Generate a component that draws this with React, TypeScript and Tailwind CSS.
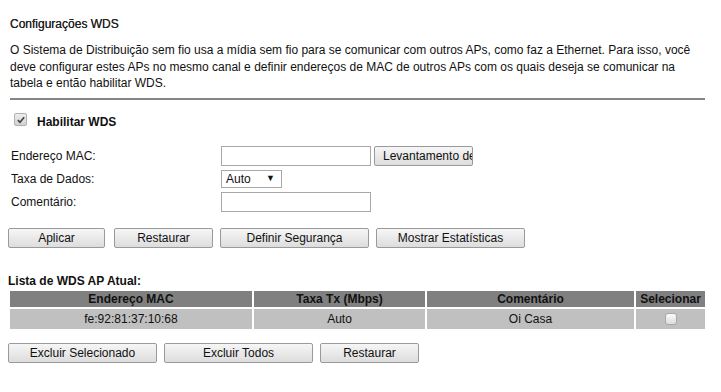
import React from 'react'

const btn =
  'h-[20px] border border-[#9a9a9a] rounded-[2px] bg-gradient-to-b from-[#f6f6f6] to-[#dddddd] text-[12px] text-[#111] leading-none'

export default function App() {
  return (
    <div className="w-[721px] h-[392px] bg-white font-['Liberation_Sans',Arial,sans-serif] text-[12px] text-[#111] overflow-hidden">
      <div className="px-[10px] pt-[17px]">
        <h1 className="text-[12px] font-normal text-[#222] leading-[14px] [text-shadow:0_0_0.3px_#333]">Configurações WDS</h1>
        <p className="mt-[11px] leading-[16.5px] text-[12px] w-[700px]">
          O Sistema de Distribuição sem fio usa a mídia sem fio para se comunicar com outros APs, como faz a Ethernet. Para isso, você
          deve configurar estes APs no mesmo canal e definir endereços de MAC de outros APs com os quais deseja se comunicar na
          tabela e então habilitar WDS.
        </p>
        <div className="mt-[6px] h-[2px] bg-[#858585] w-[695px]" />

        <label className="mt-[11px] h-[18px] flex items-center gap-[10px] pl-[4px]">
          <span className="w-[13px] h-[13px] rounded-[2px] border border-[#b0b0b0] bg-gradient-to-b from-[#eeeeee] to-[#d2d2d2] flex items-center justify-center">
            <svg viewBox="0 0 12 12" className="w-[10px] h-[10px]">
              <path d="M2.2 6.2 L4.8 8.7 L9.8 2.8" fill="none" stroke="#444" strokeWidth="2" />
            </svg>
          </span>
          <span className="font-bold text-[12px] mt-[4px]">Habilitar WDS</span>
        </label>

        <div className="mt-[17px] grid grid-cols-[211px_1fr] gap-y-[4px] items-center">
          <span className="pl-[1px]">Endereço MAC:</span>
          <div className="flex items-center gap-[3px]">
            <div className="w-[150px] h-[20px] border border-[#a9a9a9] bg-white" />
            <div className={btn + ' w-[99px] flex items-center pl-[8px] overflow-hidden whitespace-nowrap'}>Levantamento de</div>
          </div>
          <span className="pl-[1px]">Taxa de Dados:</span>
          <div className="w-[61px] h-[18px] border border-[#a9a9a9] flex items-center justify-between pl-[4px] pr-[6px]">
            <span>Auto</span>
            <span className="text-[9px]">▼</span>
          </div>
          <span className="pl-[1px]">Comentário:</span>
          <div className="w-[150px] h-[20px] border border-[#a9a9a9] bg-white" />
        </div>

        <div className="mt-[16px] -ml-[2px] flex gap-[8px]">
          <button className={btn + ' w-[97px]'}>Aplicar</button>
          <button className={btn + ' w-[99px] ml-[1px]'}>Restaurar</button>
          <button className={btn + ' w-[149px] -ml-[1px]'}>Definir Segurança</button>
          <button className={btn + ' w-[149px] -ml-[1px]'}>Mostrar Estatísticas</button>
        </div>

        <div className="mt-[26px] -ml-[2px] font-bold text-[12px] leading-[14px]">Lista de WDS AP Atual:</div>
        <table className="mt-[1px] w-[699px] -ml-[2px] table-fixed border-separate border-spacing-[2px] text-[12px]">
          <colgroup>
            <col className="w-[242px]" />
            <col className="w-[171px]" />
            <col className="w-[207px]" />
            <col />
          </colgroup>
          <thead>
            <tr className="bg-[#808080] h-[16px]">
              <th className="font-bold leading-[16px] p-0">Endereço MAC</th>
              <th className="font-bold leading-[16px] p-0">Taxa Tx (Mbps)</th>
              <th className="font-bold leading-[16px] p-0">Comentário</th>
              <th className="font-bold leading-[16px] p-0 whitespace-nowrap">Selecionar</th>
            </tr>
          </thead>
          <tbody>
            <tr className="bg-[#c0c0c0] h-[20px] text-center">
              <td className="p-0">fe:92:81:37:10:68</td>
              <td className="p-0">Auto</td>
              <td className="p-0">Oi Casa</td>
              <td className="p-0">
                <span className="inline-block align-middle w-[12px] h-[12px] rounded-[3px] border border-[#a8a8a8] bg-gradient-to-b from-[#fbfbfb] to-[#dcdcdc]" />
              </td>
            </tr>
          </tbody>
        </table>

        <div className="mt-[12px] -ml-[2px] flex gap-[7px]">
          <button className={btn + ' w-[149px]'}>Excluir Selecionado</button>
          <button className={btn + ' w-[149px]'}>Excluir Todos</button>
          <button className={btn + ' w-[99px]'}>Restaurar</button>
        </div>
      </div>
    </div>
  )
}
